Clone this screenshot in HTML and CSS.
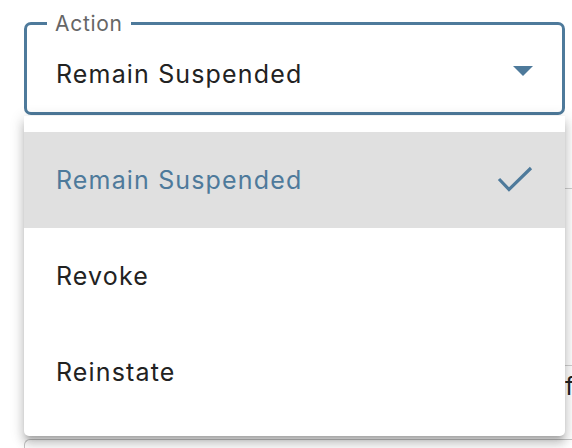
FILE: index.html
```html
<!DOCTYPE html>
<html lang="en">
<head>
<meta charset="utf-8">
<title>Action select</title>
<link rel="stylesheet" href="styles.css">
</head>
<body>
<div class="page">
  <div class="field">
    <span class="label">Action</span>
    <span class="value">Remain Suspended</span>
    <svg class="caret" width="20" height="10" viewBox="0 0 20 10"><polygon points="0,0 20,0 10,10" fill="#4e7a9b"/></svg>
  </div>
  <div class="backdrop">
    <div class="bg-row bg-row1"></div>
    <div class="bg-row bg-row2"></div>
    <div class="bg-row bg-row3">for</div>
    <div class="bg-box"></div>
  </div>
  <ul class="menu">
    <li class="item selected">
      <span>Remain Suspended</span>
      <svg class="check" width="36" height="28" viewBox="0 0 36 28"><polyline points="2,14 12,24.5 34,3" fill="none" stroke="#4e7a9b" stroke-width="3.2"/></svg>
    </li>
    <li class="item"><span>Revoke</span></li>
    <li class="item"><span>Reinstate</span></li>
  </ul>
</div>
</body>
</html>
```

FILE: styles.css
```css
html, body {
  margin: 0;
  padding: 0;
  background: #ffffff;
  overflow: hidden;
}
body {
  width: 572px;
  height: 448px;
  font-family: "Inter", "Liberation Sans", Arial, sans-serif;
  color: #222222;
}
.page {
  position: relative;
  padding: 22px 0 0 24px;
  height: 448px;
  box-sizing: border-box;
}
.field {
  position: relative;
  box-sizing: border-box;
  width: 541px;
  height: 93px;
  border: 3px solid #4e7a9b;
  border-radius: 7px;
  display: flex;
  justify-content: space-between;
  align-items: flex-start;
  padding: 35px 29px 0 29px;
  background: #fff;
}
.label {
  position: absolute;
  top: -13px;
  left: 20px;
  padding: 0 8px;
  background: #fff;
  font-size: 21px;
  line-height: 24px;
  letter-spacing: 0.7px;
  color: #666666;
}
.value {
  font-size: 25px;
  line-height: 28px;
  letter-spacing: 1.15px;
  color: #222222;
}
.caret {
  margin-top: 6px;
  display: block;
}
.backdrop {
  width: 620px;
}
.bg-row {
  box-sizing: border-box;
}
.bg-row1 {
  height: 74px;
  border-bottom: 1px solid #cfcfcf;
}
.bg-row2 {
  height: 177px;
  border-bottom: 1px solid #cfcfcf;
}
.bg-row3 {
  height: 73px;
  padding: 6px 0 0 541px;
  font-size: 25px;
  line-height: 28px;
  color: #222;
}
.bg-box {
  height: 30px;
  border: 1px solid #c4c4c4;
  border-right: none;
  border-radius: 6px 0 0 0;
}
.menu {
  position: absolute;
  top: 116px;
  left: 24px;
  width: 541px;
  margin: 0;
  padding: 16px 0;
  list-style: none;
  background: #fff;
  border-radius: 0 0 5px 5px;
  box-shadow: 0 5px 5px -3px rgba(0,0,0,0.2), 0 8px 10px 1px rgba(0,0,0,0.14), 0 3px 14px 2px rgba(0,0,0,0.12);
  z-index: 2;
}
.item {
  height: 96px;
  box-sizing: border-box;
  display: flex;
  align-items: center;
  justify-content: space-between;
  padding: 0 32px 0 32px;
  font-size: 25px;
  line-height: 28px;
  letter-spacing: 1.15px;
  color: #222222;
}
.item.selected {
  background: #e0e0e0;
  color: #4e7a9b;
}
.check {
  display: block;
  margin-top: -2px;
}
```
